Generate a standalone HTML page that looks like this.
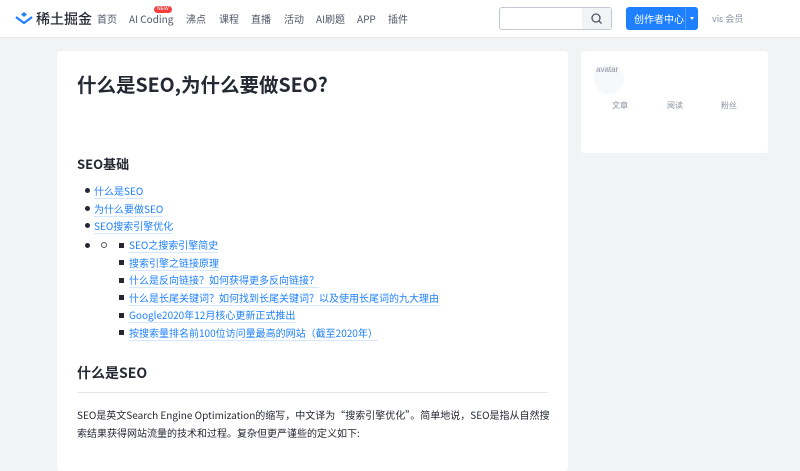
<!DOCTYPE html>
<html><head><meta charset="utf-8"><style>
*{margin:0;padding:0;box-sizing:border-box}
body{width:800px;height:450px;overflow:hidden;background:#f2f3f5;font-family:"Noto Sans CJK SC","Liberation Sans",sans-serif;color:#252933}
.hd{position:absolute;left:0;top:0;width:800px;height:38px;background:#fff;border-bottom:1px solid #e4e6eb}
.logo{position:absolute;left:15px;top:9px;font-size:14px;font-weight:500;color:#252933;display:flex;align-items:center;gap:3px;line-height:20px}
.nav{position:absolute;left:97px;top:11px;font-size:10px;color:#515767}
.nav span{position:absolute;white-space:nowrap;top:0;line-height:15px}
.new{position:absolute;left:154px;top:6px;background:#f53f3f;color:#fff;font-size:5px;border-radius:4px;padding:0 3px;height:7px;line-height:7px;font-family:"Liberation Sans",sans-serif}
.search{position:absolute;left:499px;top:7px;width:113px;height:23px;border:1px solid #c2c8d1;border-radius:3px;background:#fff}
.search .b{position:absolute;right:0;top:0;width:29px;height:21px;background:#f2f3f5}
.btn{position:absolute;left:626px;top:7px;width:72px;height:23px;background:#1e80ff;border-radius:3px;color:#fff;font-size:10px;line-height:23px;padding-left:8px}
.btn i{position:absolute;right:0;top:0;width:13px;height:23px;border-left:1px solid #4d9aff}
.btn i:after{content:"";position:absolute;left:4px;top:10px;border:2.5px solid transparent;border-top:3px solid #fff}
.vip{position:absolute;left:712px;top:11px;font-size:9px;color:#8a919f;line-height:15px}
.card{position:absolute;left:57px;top:51px;width:511px;height:420px;background:#fff;border-radius:3px}
.side{position:absolute;left:581px;top:51px;width:187px;height:102px;background:#fff;border-radius:3px}
h1{position:absolute;left:20px;top:18px;font-size:19.5px;font-weight:bold;color:#252933;line-height:30px}
h3{position:absolute;left:20px;font-size:13px;font-weight:bold;line-height:18px}
.l{position:absolute;font-size:10px;color:#1e80ff;border-bottom:1px solid #d6e8ff;line-height:15px;white-space:nowrap}
.dot{position:absolute;width:5px;height:5px;border-radius:50%;background:#252933}
.sq{position:absolute;width:5px;height:5px;background:#252933}
.hr{position:absolute;left:20px;top:341px;width:471px;height:1px;background:#e4e6eb}
p{position:absolute;left:20px;top:355px;width:475px;font-size:10px;line-height:18px;color:#252933}
</style></head><body>
<div class="hd">
<div class="logo"><svg width="18" height="14" viewBox="0 0 18 14"><path d="M9 0L12 2.5 9 5 6 2.5Z" fill="#1e80ff"/><path d="M1 5L9 11 17 5" stroke="#1e80ff" stroke-width="2.2" fill="none"/></svg>稀土掘金</div>
<div class="nav"><span style="left:0">首页</span><span style="left:32px">AI Coding</span><span style="left:89px">沸点</span><span style="left:122px">课程</span><span style="left:154px">直播</span><span style="left:187px">活动</span><span style="left:219px">AI刷题</span><span style="left:260px">APP</span><span style="left:291px">插件</span></div>
<div class="new">NEW</div>
<div class="search"><div class="b"><svg width="29" height="21" viewBox="0 0 29 21"><circle cx="14" cy="10" r="4" stroke="#515767" stroke-width="1.3" fill="none"/><path d="M17 13L19.5 15.5" stroke="#515767" stroke-width="1.3"/></svg></div></div>
<div class="btn">创作者中心<i></i></div>
<div class="vip">vi<span>ɛ</span> 会员</div>
</div>
<div class="card">
<h1>什么是SEO,为什么要做SEO?</h1>
<h3 style="top:104px">SEO基础</h3>
<div class="dot" style="left:28px;top:137px"></div><div class="l" style="left:37px;top:132px">什么是SEO</div>
<div class="dot" style="left:28px;top:155px"></div><div class="l" style="left:37px;top:150px">为什么要做SEO</div>
<div class="dot" style="left:28px;top:172px"></div><div class="l" style="left:37px;top:167px">SEO搜索引擎优化</div>
<div class="dot" style="left:28px;top:192px"></div>
<div style="position:absolute;left:44px;top:191px;width:6px;height:6px;border:1px solid #555;border-radius:50%"></div>
<div class="sq" style="left:62px;top:192px"></div><div class="l" style="left:72px;top:186px">SEO之搜索引擎简史</div>
<div class="sq" style="left:62px;top:209px"></div><div class="l" style="left:72px;top:204px">搜索引擎之链接原理</div>
<div class="sq" style="left:62px;top:227px"></div><div class="l" style="left:72px;top:221px">什么是反向链接？如何获得更多反向链接？</div>
<div class="sq" style="left:62px;top:244px"></div><div class="l" style="left:72px;top:239px">什么是长尾关键词？如何找到长尾关键词？以及使用长尾词的九大理由</div>
<div class="sq" style="left:62px;top:262px"></div><div class="l" style="left:72px;top:256px">Google2020年12月核心更新正式推出</div>
<div class="sq" style="left:62px;top:279px"></div><div class="l" style="left:72px;top:274px">按搜索量排名前100位访问量最高的网站（截至2020年）</div>
<h3 style="top:313px;font-size:14px">什么是SEO</h3>
<div class="hr"></div>
<p>SEO是英文Search Engine Optimization的缩写，中文译为“搜索引擎优化”。简单地说，SEO是指从自然搜索结果获得网站流量的技术和过程。复杂但更严谨些的定义如下:</p>
</div>
<div class="side">
<div style="position:absolute;left:13px;top:13px;width:30px;height:30px;border-radius:50%;background:#f7f8fa;font-size:8px;color:#8a919f;padding-left:2px;padding-top:1px;font-family:'Liberation Sans',sans-serif">avatar</div>
<div style="position:absolute;left:31px;top:49px;font-size:8px;color:#8a919f">文章</div>
<div style="position:absolute;left:86px;top:49px;font-size:8px;color:#8a919f">阅读</div>
<div style="position:absolute;left:140px;top:49px;font-size:8px;color:#8a919f">粉丝</div>
</div>
</body></html>
